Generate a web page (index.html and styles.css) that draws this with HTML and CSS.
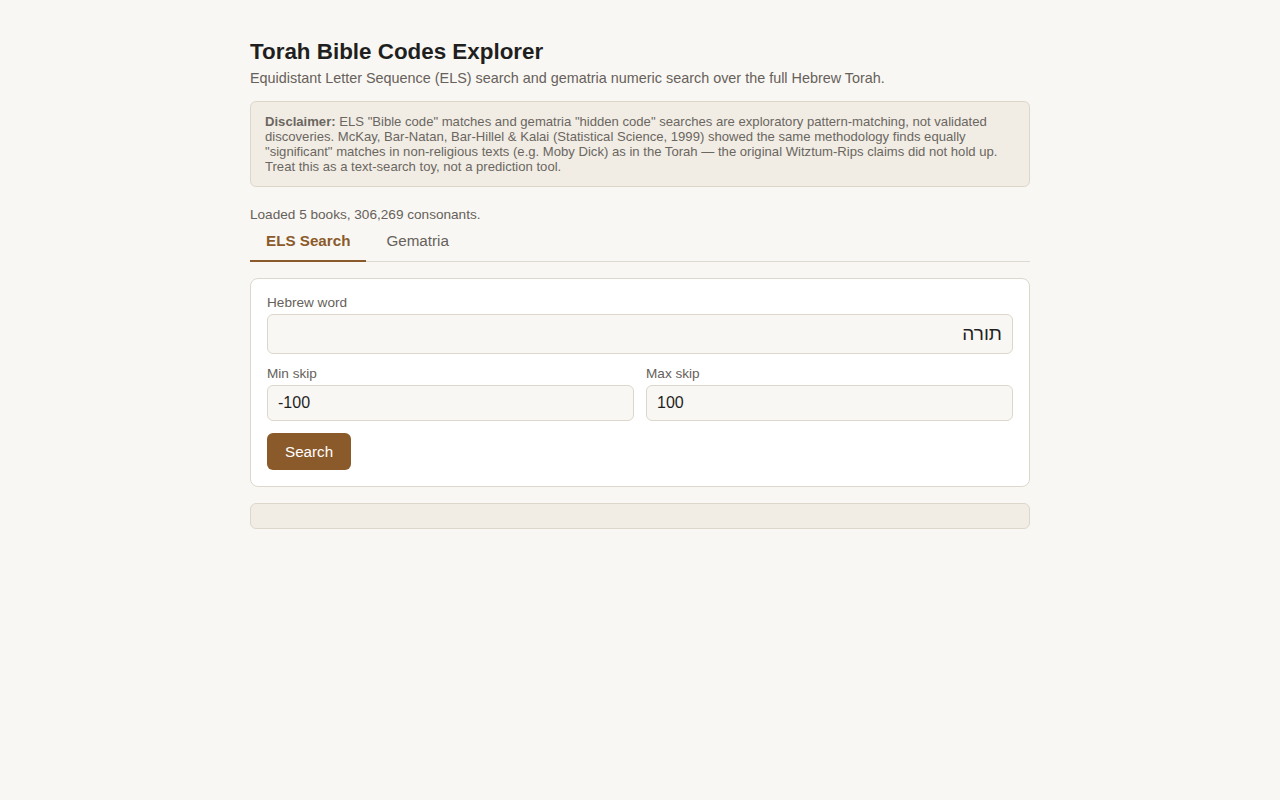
FILE: index.html
```html
<html>
    <head>
        <meta charset="utf-8">
        <title>Torah Bible Codes Explorer</title>
        <link rel="stylesheet" href="styles.css">
    </head>
    <body>
        <div class="app">
            <h1>Torah Bible Codes Explorer</h1>
            <p class="subtitle">Equidistant Letter Sequence (ELS) search and gematria numeric search over the full Hebrew Torah.</p>

            <div class="disclaimer">
                <b>Disclaimer:</b> ELS "Bible code" matches and gematria "hidden code" searches are exploratory pattern-matching, not validated discoveries. McKay, Bar-Natan, Bar-Hillel &amp; Kalai (Statistical Science, 1999) showed the same methodology finds equally "significant" matches in non-religious texts (e.g. Moby Dick) as in the Torah — the original Witztum-Rips claims did not hold up. Treat this as a text-search toy, not a prediction tool.
            </div>

            <div class="status">Loaded 5 books, 306,269 consonants.</div>

            <div class="tabs">
                <div class="tab active">ELS Search</div>
                <div class="tab">Gematria</div>
            </div>

            <div class="card">
                <label class="field">
                    <span>Hebrew word</span>
                    <input class="word" type="text" dir="rtl" value="תורה">
                </label>
                <div class="row">
                    <label class="field">
                        <span>Min skip</span>
                        <input type="text" value="-100">
                    </label>
                    <label class="field">
                        <span>Max skip</span>
                        <input type="text" value="100">
                    </label>
                </div>
                <div>
                    <button class="btn">Search</button>
                </div>
            </div>

            <div class="results"></div>
        </div>
    </body>
</html>
```

FILE: styles.css
```css
body {
    margin: 0;
    font-family: "Liberation Sans", Arial, sans-serif;
    background-color: #f9f7f3;
    color: #1f1f1f;
}

.app {
    width: 780px;
    margin: 0 auto;
    padding-top: 38px;
}

h1 {
    font-size: 22.4px;
    margin: 0 0 3px 0;
    line-height: 28px;
}

.subtitle {
    margin: 0 0 14px 0;
    font-size: 14.4px;
    color: #66615a;
    line-height: 18px;
}

.disclaimer {
    background-color: #f1ede5;
    border: 1px solid #ddd7cb;
    border-radius: 6px;
    padding: 12px 14px;
    font-size: 13.1px;
    line-height: 15px;
    color: #6b665f;
}

.status {
    margin-top: 19px;
    font-size: 13.6px;
    line-height: 17px;
    color: #66615a;
}

.tabs {
    display: flex;
    gap: 4px;
    border-bottom: 1px solid #ddd8d0;
    margin-bottom: 16px;
}

.tab {
    padding: 8px 16px 9px 16px;
    font-size: 15.2px;
    line-height: 20px;
    color: #66615a;
    border-bottom: 2px solid transparent;
    margin-bottom: -1px;
}

.tab.active {
    color: #8b5a2b;
    font-weight: bold;
    border-bottom-color: #8b5a2b;
}

.card {
    background-color: #fff;
    border: 1px solid #ddd8cc;
    border-radius: 8px;
    padding: 16px;
    display: flex;
    flex-direction: column;
    gap: 12px;
}

.field {
    display: flex;
    flex-direction: column;
    gap: 3px;
    flex: 1;
}

.field span {
    font-size: 13.6px;
    line-height: 16px;
    color: #66615a;
}

.field input {
    font-family: "Liberation Sans", Arial, sans-serif;
    font-size: 16px;
    height: 36px;
    padding: 0 10px;
    background-color: #f9f7f3;
    border: 1px solid #ddd7cb;
    border-radius: 6px;
    color: #1f1f1f;
    box-sizing: border-box;
    width: 100%;
}

.field input.word {
    height: 40px;
    font-size: 19px;
}

.row {
    display: flex;
    gap: 12px;
}

.btn {
    background-color: #8b5a2b;
    color: #fff;
    border: none;
    border-radius: 6px;
    font-family: "Liberation Sans", Arial, sans-serif;
    font-size: 15.2px;
    height: 37px;
    padding: 0 18px;
}

.results {
    margin-top: 16px;
    background-color: #f1ede5;
    border: 1px solid #ddd7cb;
    border-radius: 6px;
    padding: 12px;
}
```
